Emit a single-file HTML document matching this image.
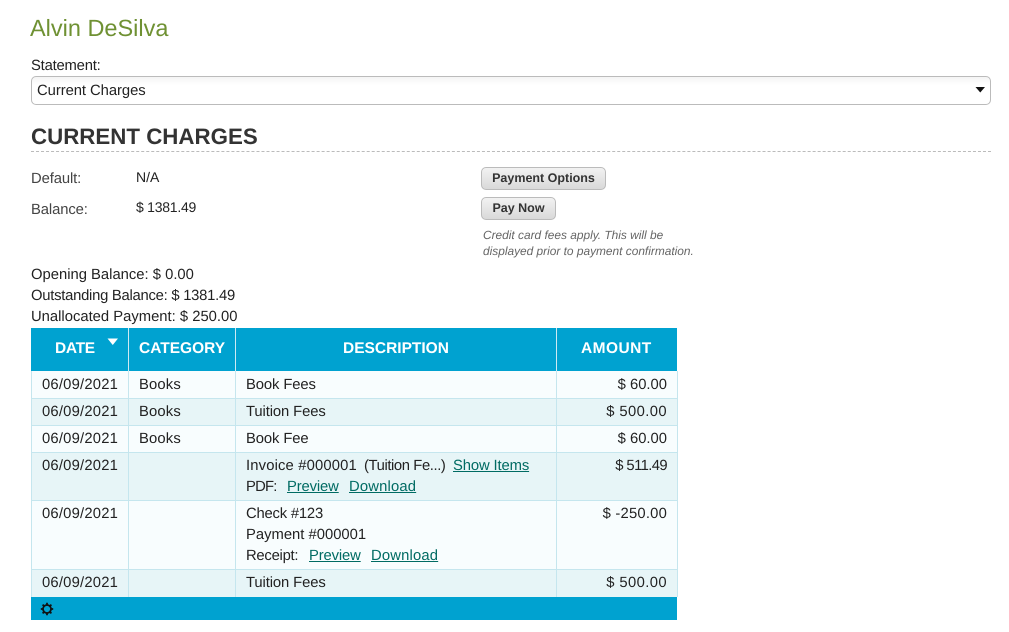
<!DOCTYPE html>
<html><head><meta charset="utf-8">
<style>
html,body{margin:0;padding:0;background:#fff;width:1009px;height:632px;overflow:hidden}
body{font-family:"Liberation Sans",sans-serif;font-size:14.8px;color:#222;position:relative;text-rendering:geometricPrecision}
.t{position:absolute;white-space:nowrap;line-height:20px}
.d{letter-spacing:.2px}
.b{letter-spacing:.15px}
.btn{position:absolute;box-sizing:border-box;height:23px;border:1px solid #bbb;border-radius:5px;background:linear-gradient(#f2f2f2,#d9d9d9);font-weight:bold;font-size:12.5px;line-height:20px;text-align:center;color:#333}
a{color:#006b63;text-decoration:underline}
.r{position:absolute;left:31px;width:646px;box-sizing:border-box;border-bottom:1px solid #c5e6ee}
.c{position:absolute;width:1px;background:#c5e6ee;top:371px;height:226px}
.h{position:absolute;width:1px;background:#cdeaf3;top:328px;height:43px}
.th{position:absolute;top:340px;color:#fff;font-weight:bold;font-size:15.5px;line-height:18px;white-space:nowrap}
.am{position:absolute;right:342px;white-space:nowrap;line-height:20px}
</style></head><body>
<div class="t" style="left:30px;top:15px;font-size:23.5px;line-height:26px;color:#6f9133">Alvin DeSilva</div>
<div class="t" style="left:31px;top:56px;letter-spacing:-.2px">Statement:</div>
<div style="position:absolute;left:31px;top:76px;width:960px;height:29px;box-sizing:border-box;border:1px solid #bbb;border-radius:5px;background:linear-gradient(#f4f4f4,#fff 30%)"></div>
<div class="t" style="left:37px;top:81px;letter-spacing:-.05px">Current Charges</div>
<svg style="position:absolute;left:975px;top:86px" width="11" height="8"><path d="M0.5 1H10L5.25 6.5Z" fill="#111"/></svg>
<div class="t" style="left:31px;top:123px;font-size:22.3px;line-height:28px;font-weight:bold;color:#333">CURRENT CHARGES</div>
<div style="position:absolute;left:31px;top:151px;width:960px;border-top:1px dashed #bbb"></div>
<div class="t" style="left:31px;top:169px;color:#444;letter-spacing:-.1px">Default:</div>
<div class="t" style="left:136px;top:168px;font-size:14px;line-height:18px">N/A</div>
<div class="t" style="left:31px;top:200px;color:#444;letter-spacing:-.1px">Balance:</div>
<div class="t" style="left:136px;top:198px;font-size:14px;line-height:18px;letter-spacing:-.25px">$ 1381.49</div>
<div class="btn" style="left:481px;top:167px;width:125px">Payment Options</div>
<div class="btn" style="left:481px;top:197px;width:75px">Pay Now</div>
<div class="t" style="left:483px;top:227px;font-size:11.9px;line-height:16px;font-style:italic;color:#666">Credit card fees apply. This will be<br>displayed prior to payment confirmation.</div>
<div class="t" style="left:31px;top:265px">Opening Balance: $ 0.00</div>
<div class="t" style="left:31px;top:286px;letter-spacing:-.25px">Outstanding Balance: $ 1381.49</div>
<div class="t" style="left:31px;top:307px">Unallocated Payment: $ 250.00</div>

<div style="position:absolute;left:31px;top:328px;width:646px;height:43px;background:#00a2d0"></div>
<div class="h" style="left:128px"></div><div class="h" style="left:235px"></div><div class="h" style="left:556px"></div>
<div class="th" style="left:55px;letter-spacing:-.3px">DATE</div>
<svg style="position:absolute;left:107px;top:338px" width="12" height="8"><path d="M0.5 0.5H11L5.75 7Z" fill="#fff"/></svg>
<div class="th" style="left:139px">CATEGORY</div>
<div class="th" style="left:343px">DESCRIPTION</div>
<div class="th" style="left:581px;letter-spacing:.45px">AMOUNT</div>

<div class="r" style="top:371px;height:28px;background:#f8fdfe"></div>
<div class="r" style="top:399px;height:27px;background:#e7f5f7"></div>
<div class="r" style="top:426px;height:27px;background:#f8fdfe"></div>
<div class="r" style="top:453px;height:48px;background:#e7f5f7"></div>
<div class="r" style="top:501px;height:69px;background:#f8fdfe"></div>
<div class="r" style="top:570px;height:27px;background:#e7f5f7;border-bottom:0"></div>
<div class="c" style="left:31px"></div><div class="c" style="left:128px"></div><div class="c" style="left:235px"></div><div class="c" style="left:556px"></div><div class="c" style="left:677px"></div>

<div class="t d" style="left:42px;top:375px">06/09/2021</div><div class="t b" style="left:139px;top:375px">Books</div><div class="t" style="left:246px;top:375px;letter-spacing:-.1px">Book Fees</div><div class="am" style="top:375px">$ 60.00</div>
<div class="t d" style="left:42px;top:402px">06/09/2021</div><div class="t b" style="left:139px;top:402px">Books</div><div class="t" style="left:246px;top:402px;letter-spacing:-.1px">Tuition Fees</div><div class="am" style="top:402px;letter-spacing:.4px">$ 500.00</div>
<div class="t d" style="left:42px;top:429px">06/09/2021</div><div class="t b" style="left:139px;top:429px">Books</div><div class="t" style="left:246px;top:429px;letter-spacing:-.1px">Book Fee</div><div class="am" style="top:429px">$ 60.00</div>
<div class="t d" style="left:42px;top:456px">06/09/2021</div>
<div class="t" style="left:246px;top:456px;letter-spacing:.15px">Invoice #000001</div><div class="t" style="left:364px;top:456px;letter-spacing:-.4px">(Tuition Fe...)</div><div class="t" style="left:453px;top:456px;letter-spacing:-.12px"><a>Show Items</a></div>
<div class="am" style="top:456px;letter-spacing:-.6px">$ 511.49</div>
<div class="t" style="left:246px;top:477px;letter-spacing:-.8px">PDF:</div><div class="t" style="left:287px;top:477px;letter-spacing:-.13px"><a>Preview</a></div><div class="t" style="left:349px;top:477px;letter-spacing:.17px"><a>Download</a></div>
<div class="t d" style="left:42px;top:504px">06/09/2021</div>
<div class="t" style="left:246px;top:504px;letter-spacing:-.2px">Check #123</div><div class="am" style="top:504px;letter-spacing:.2px">$ -250.00</div>
<div class="t" style="left:246px;top:525px">Payment #000001</div>
<div class="t" style="left:246px;top:546px;letter-spacing:-.25px">Receipt:</div><div class="t" style="left:309px;top:546px;letter-spacing:-.13px"><a>Preview</a></div><div class="t" style="left:371px;top:546px;letter-spacing:.17px"><a>Download</a></div>
<div class="t d" style="left:42px;top:573px">06/09/2021</div><div class="t" style="left:246px;top:573px;letter-spacing:-.1px">Tuition Fees</div><div class="am" style="top:573px;letter-spacing:.4px">$ 500.00</div>

<div style="position:absolute;left:31px;top:597px;width:646px;height:23px;background:#00a2d0"></div>
<svg style="position:absolute;left:40px;top:602px" width="14" height="14" viewBox="0 0 14 14"><circle cx="7" cy="7" r="4" fill="none" stroke="#111" stroke-width="1.8"/><path d="M7 .8V3M7 11V13.2M.8 7H3M11 7H13.2M2.6 2.6L4 4M10 10L11.4 11.4M2.6 11.4L4 10M10 4L11.4 2.6" stroke="#111" stroke-width="1.8"/></svg>
</body></html>
